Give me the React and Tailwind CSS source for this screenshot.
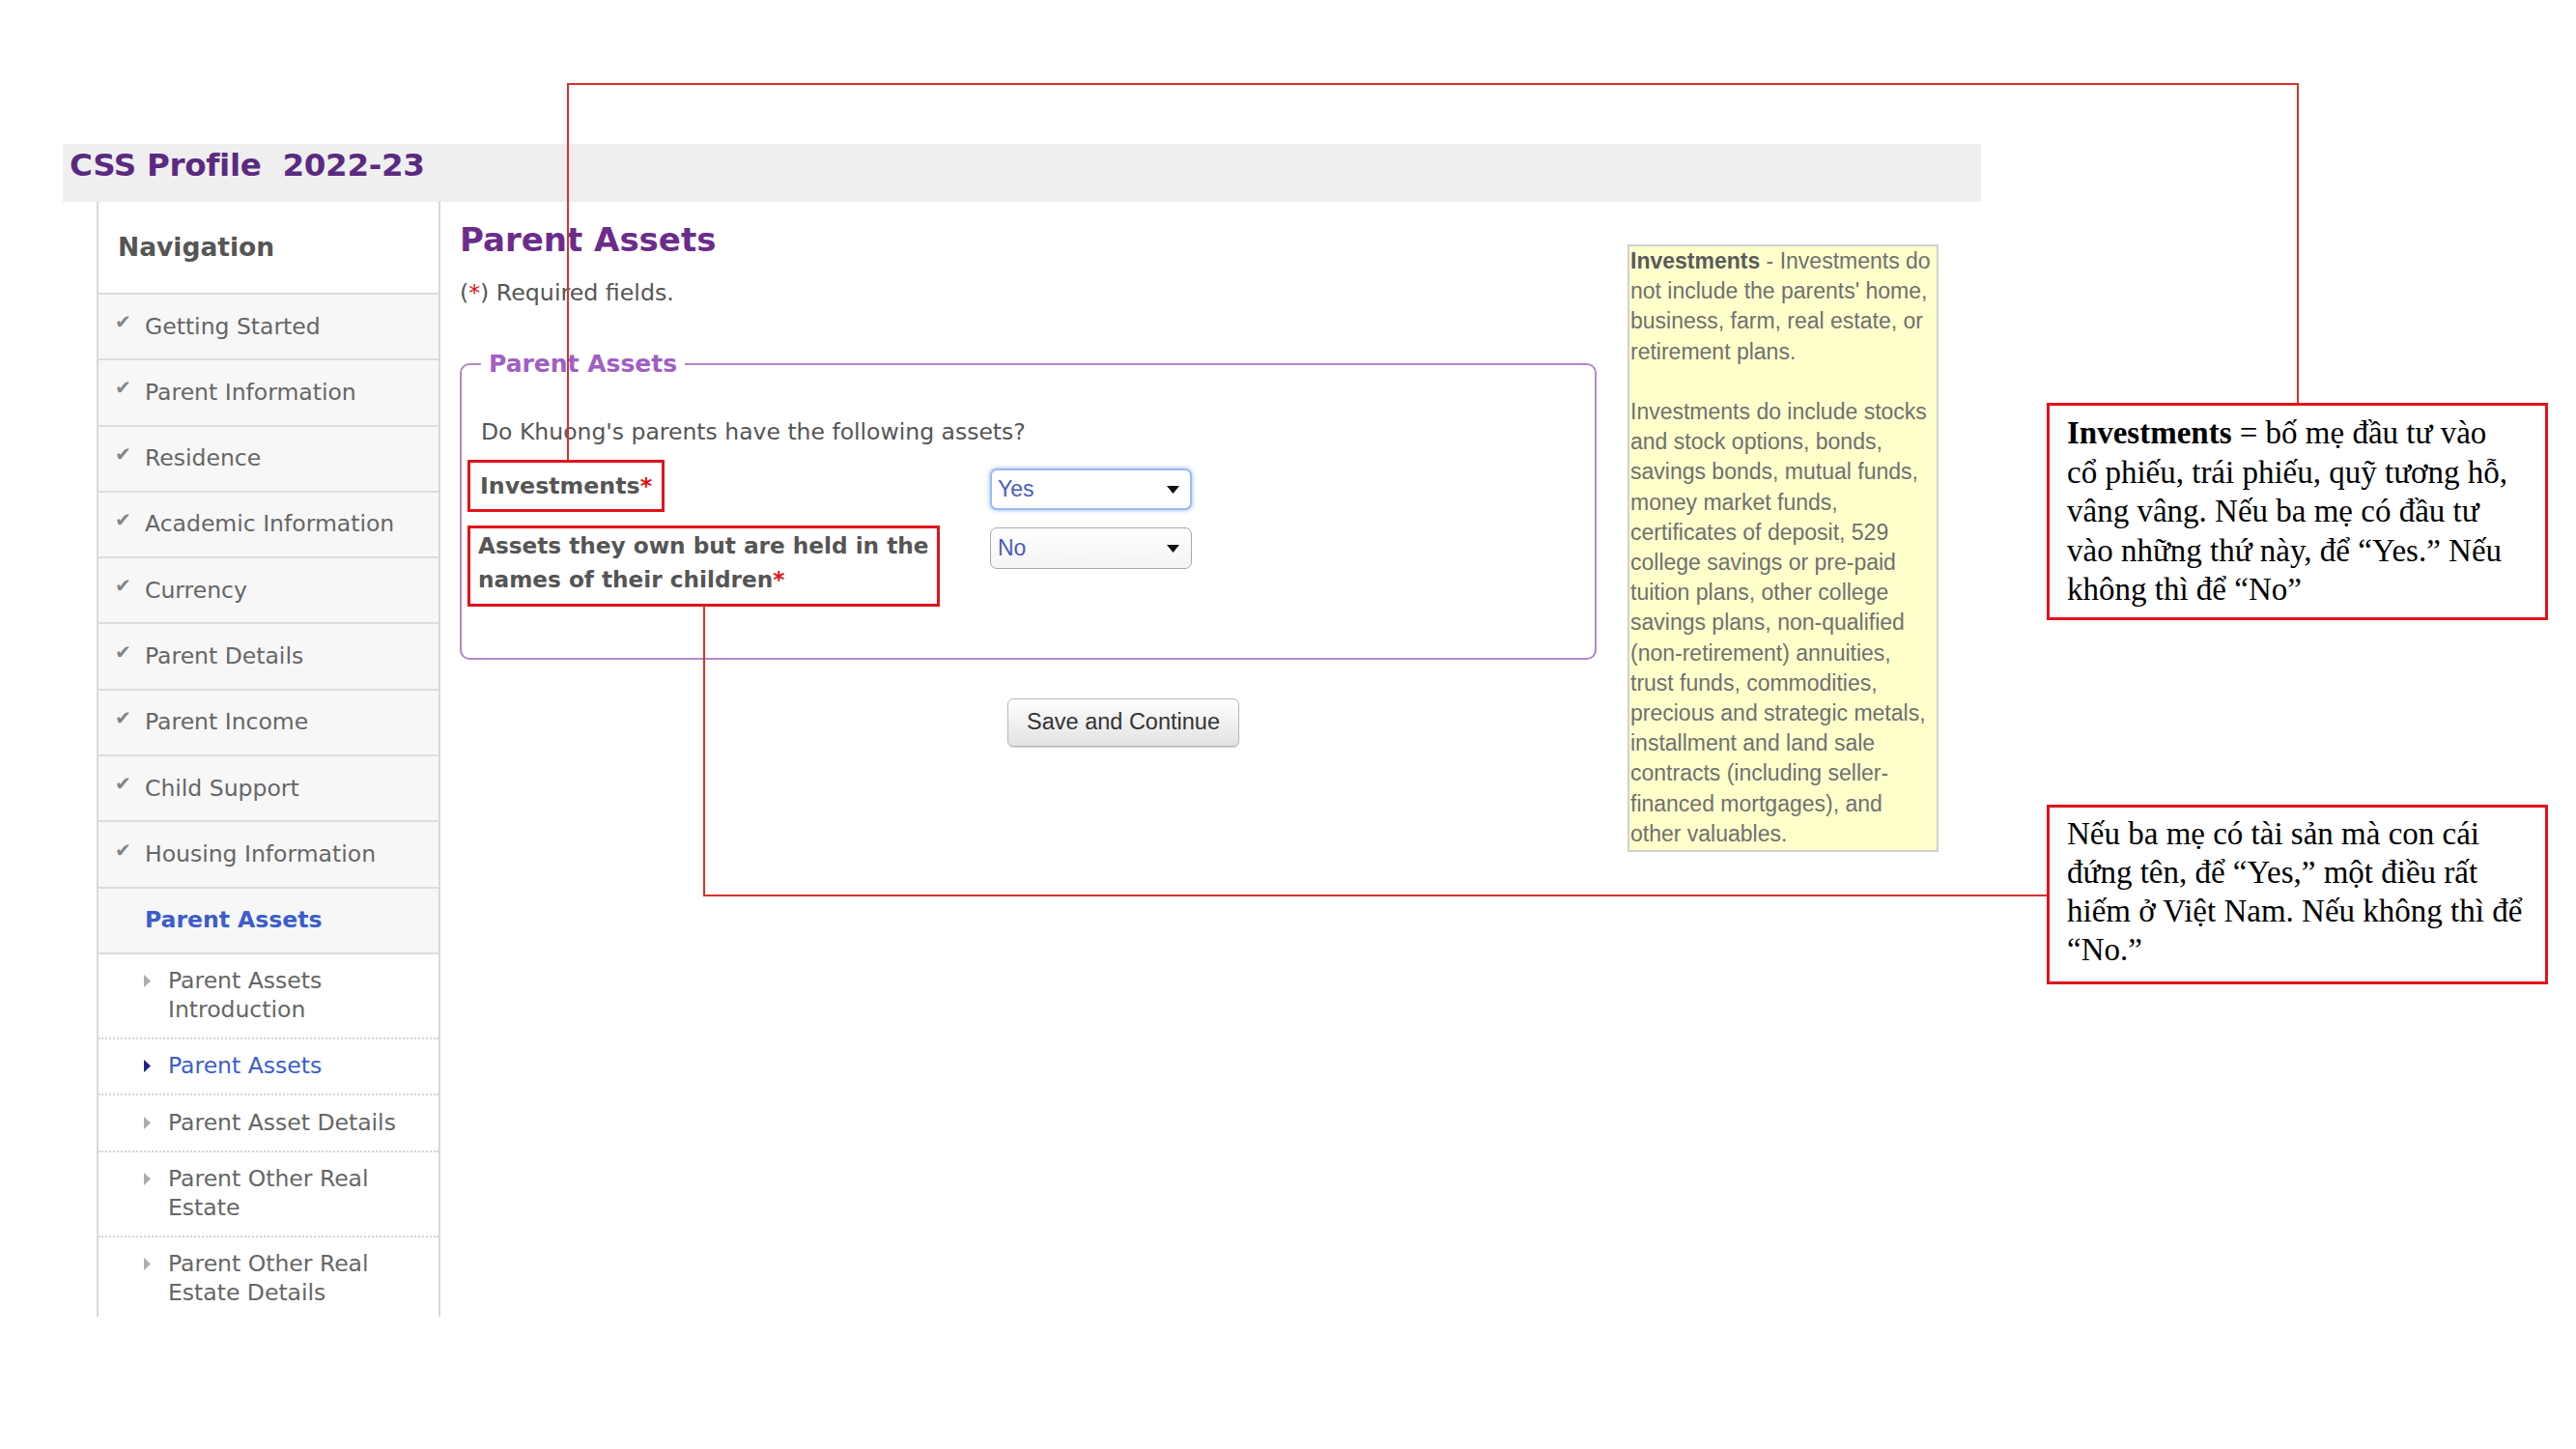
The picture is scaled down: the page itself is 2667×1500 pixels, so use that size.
import React from 'react'

const done = [
  'Getting Started',
  'Parent Information',
  'Residence',
  'Academic Information',
  'Currency',
  'Parent Details',
  'Parent Income',
  'Child Support',
  'Housing Information',
]

const subs = [
  { label: 'Parent Assets Introduction' },
  { label: 'Parent Assets', active: true },
  { label: 'Parent Asset Details' },
  { label: 'Parent Other Real Estate' },
  { label: 'Parent Other Real Estate Details', last: true },
]

const help = [
  'not include the parents\' home,',
  'business, farm, real estate, or',
  'retirement plans.',
  '\u00a0',
  'Investments do include stocks',
  'and stock options, bonds,',
  'savings bonds, mutual funds,',
  'money market funds,',
  'certificates of deposit, 529',
  'college savings or pre-paid',
  'tuition plans, other college',
  'savings plans, non-qualified',
  '(non-retirement) annuities,',
  'trust funds, commodities,',
  'precious and strategic metals,',
  'installment and land sale',
  'contracts (including seller-',
  'financed mortgages), and',
  'other valuables.',
]

function Tri({ active }) {
  return (
    <svg width="9" height="15" viewBox="0 0 9 15" className="mt-[7px]">
      <path d="M1 1 L8 7.5 L1 14 Z" fill={active ? '#1b2388' : '#ababab'} />
    </svg>
  )
}

function Caret() {
  return (
    <svg width="13" height="8" viewBox="0 0 13 8">
      <path d="M0 0 H13 L6.5 8 Z" fill="#111" />
    </svg>
  )
}

function Select({ value, focus }) {
  return (
    <div
      className={
        focus
          ? 'w-[209px] h-[43px] rounded-[7px] border-2 border-[#9dbbef] shadow-[0_0_5px_#8fb4f5] bg-white flex items-center justify-between pl-[6px] pr-[11px]'
          : 'w-[209px] h-[43px] rounded-[7px] border border-[#a8a8a8] bg-gradient-to-b from-white to-[#f4f4f4] flex items-center justify-between pl-[7px] pr-[12px]'
      }
    >
      <span className="font-['Liberation_Sans',sans-serif] text-[23px] text-[#4a5cb8]">{value}</span>
      <Caret />
    </div>
  )
}

function Sidebar() {
  return (
    <aside className="ml-[35px] w-[356px] shrink-0 border-l-2 border-r-2 border-[#d8d8d8] text-[23.5px]">
      <div className="h-[96px] border-b-2 border-[#dcdcdc] bg-white flex items-center pl-[20px]">
        <span className="text-[26.5px] font-bold text-[#555]">Navigation</span>
      </div>
      {done.map(item => (
        <div
          key={item}
          className="h-[68.3px] border-b-2 border-[#dcdcdc] bg-[#f7f7f7] flex items-center pl-[17px] text-[#666]"
        >
          <span className="w-[31px] text-[20px] leading-[20px] text-[#858585] -translate-y-[5px]">✔</span>
          <span>{item}</span>
        </div>
      ))}
      <div className="h-[68.3px] border-b-2 border-[#dcdcdc] bg-[#f7f7f7] flex items-center pl-[48px] font-bold text-[#3c5dcb]">
        Parent Assets
      </div>
      {subs.map(s => (
        <div
          key={s.label}
          className={
            s.last
              ? 'bg-white flex items-start pl-[46px] pt-[13.5px] pb-[10px]'
              : 'bg-white flex items-start pl-[46px] py-[13.5px] border-b-2 border-dotted border-[#d3d3d3]'
          }
        >
          <span className="w-[26px] shrink-0">
            <Tri active={s.active} />
          </span>
          <span className={s.active ? 'w-[250px] leading-[29.5px] text-[#3c5dcb]' : 'w-[250px] leading-[29.5px] text-[#666]'}>
            {s.label}
          </span>
        </div>
      ))}
    </aside>
  )
}

function Form() {
  return (
    <div className="w-[1177px] shrink-0 pt-[19px]">
      <h1 className="text-[34px] font-bold leading-[40px] text-[#6b2c8b]">Parent Assets</h1>
      <p className="mt-[21px] text-[23.7px] leading-[28px] text-[#555]">
        (<span className="text-[#e01010]">*</span>) Required fields.
      </p>
      <fieldset className="mt-[45px] border-2 border-[#b287cb] rounded-[10px] px-[6px] pb-[53px]">
        <legend className="ml-[14px] px-[8px] text-[25px] font-bold leading-[30px] text-[#a05fc2]">
          Parent Assets
        </legend>
        <p className="mt-[41px] pl-[14px] text-[23.5px] leading-[28px] text-[#555]">
          Do Khuong's parents have the following assets?
        </p>
        <div className="mt-[15px] flex items-start">
          <div className="w-[541px] shrink-0">
            <span className="inline-block border-[3px] border-[#e0141b] px-[10px] py-[10px] text-[23.7px] font-bold leading-[28px] text-[#555]">
              Investments<span className="text-[#e01010]">*</span>
            </span>
          </div>
          <div className="mt-[9px]">
            <Select value="Yes" focus />
          </div>
        </div>
        <div className="mt-[14px] flex items-start">
          <div className="w-[541px] shrink-0">
            <span className="inline-block border-[3px] border-[#e0141b] px-[8px] pb-[8px] text-[23.2px] font-bold leading-[35px] text-[#555] whitespace-nowrap">
              Assets they own but are held in the
              <br />
              names of their children<span className="text-[#e01010]">*</span>
            </span>
          </div>
          <div className="mt-[2px]">
            <Select value="No" />
          </div>
        </div>
      </fieldset>
      <button className="mt-[40px] ml-[567px] w-[240px] h-[50px] rounded-[6px] border border-[#b8b8b8] bg-gradient-to-b from-white to-[#e2e2e2] shadow-[0_1px_1px_#cfcfcf] font-['Liberation_Sans',sans-serif] text-[23.5px] text-[#333]">
        Save and Continue
      </button>
    </div>
  )
}

function HelpBox() {
  return (
    <div className="ml-[32px] mt-[44px] w-[322px] h-[629px] shrink-0 border-2 border-[#d0d0d0] bg-[#ffffcc] pl-[1px] font-['Liberation_Sans',sans-serif] text-[23px] leading-[31.2px] text-[#707070] whitespace-nowrap">
      <div>
        <span className="font-bold text-[#5a5a5a]">Investments</span> - Investments do
      </div>
      {help.map((l, i) => (
        <div key={i}>{l}</div>
      ))}
    </div>
  )
}

function Annotations() {
  return (
    <>
      <div className="absolute left-[587px] top-[86px] w-[2px] h-[390px] bg-[#d8312c]" />
      <div className="absolute left-[587px] top-[86px] w-[1793px] h-[2px] bg-[#d8312c]" />
      <div className="absolute left-[2378px] top-[86px] w-[2px] h-[331px] bg-[#d8312c]" />
      <div className="absolute left-[728px] top-[627px] w-[2px] h-[301px] bg-[#d8312c]" />
      <div className="absolute left-[728px] top-[926px] w-[1391px] h-[2px] bg-[#d8312c]" />

      <div className="absolute left-[2119px] top-[417px] w-[519px] h-[225px] border-[3px] border-[#e3131b] bg-white pl-[18px] pt-[8px] font-['Liberation_Serif',serif] text-[33px] leading-[40.5px] text-black whitespace-nowrap">
        <b>Investments</b> = bố mẹ đầu tư vào
        <br />
        cổ phiếu, trái phiếu, quỹ tương hỗ,
        <br />
        vâng vâng. Nếu ba mẹ có đầu tư
        <br />
        vào những thứ này, để “Yes.” Nếu
        <br />
        không thì để “No”
      </div>

      <div className="absolute left-[2119px] top-[833px] w-[519px] h-[186px] border-[3px] border-[#e3131b] bg-white pl-[18px] pt-[7px] font-['Liberation_Serif',serif] text-[33px] leading-[40px] text-black whitespace-nowrap">
        Nếu ba mẹ có tài sản mà con cái
        <br />
        đứng tên, để “Yes,” một điều rất
        <br />
        hiếm ở Việt Nam. Nếu không thì để
        <br />
        “No.”
      </div>
    </>
  )
}

export default function App() {
  return (
    <div className="relative w-[2667px] h-[1500px] overflow-hidden bg-white font-['DejaVu_Sans',sans-serif]">
      <div className="ml-[65px] pt-[149px] w-[1986px]">
        <div className="h-[60px] bg-[#efefef] pl-[7px] pt-[2px]">
          <span className="text-[32.5px] font-bold leading-[40px] tracking-[-0.3px] text-[#5b2a80]">
            CSS Profile&nbsp; 2022-23
          </span>
        </div>
        <div className="flex items-start">
          <Sidebar />
          <main className="flex pl-[20px]">
            <Form />
            <HelpBox />
          </main>
        </div>
      </div>
      <Annotations />
    </div>
  )
}
